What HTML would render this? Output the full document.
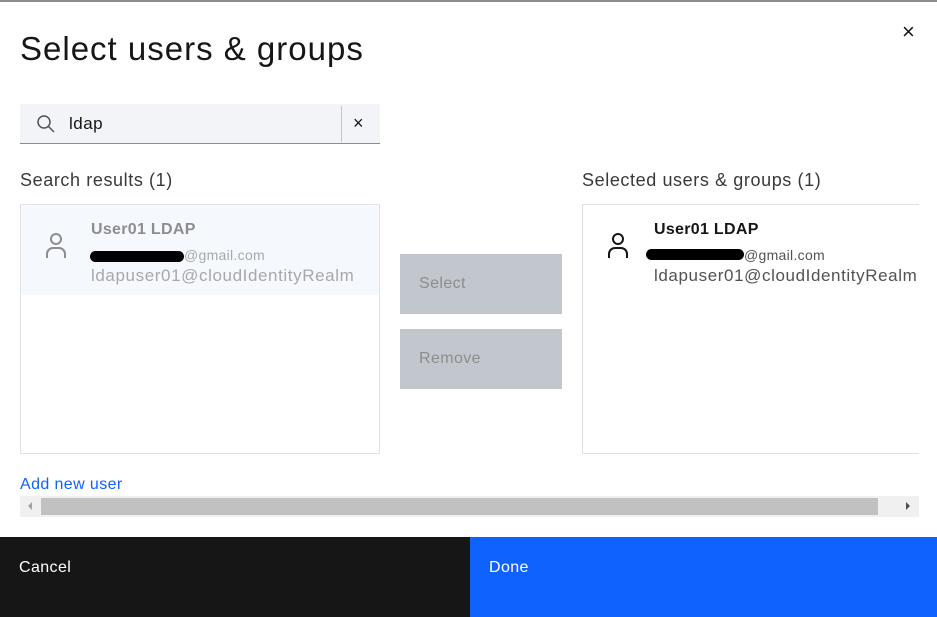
<!DOCTYPE html>
<html><head><style>
*{box-sizing:border-box;margin:0;padding:0}
body{width:937px;height:617px;overflow:hidden;background:#fff;font-family:"Liberation Sans",sans-serif;position:relative;color:#161616}
.a{position:absolute;white-space:nowrap}
</style></head><body>
<div class="a" style="left:0;top:0;width:937px;height:2px;background:#8d8d8d"></div>
<div class="a" style="left:20px;top:30px;font-size:33px;letter-spacing:1px;color:#161616">Select users &amp; groups</div>
<div class="a" style="left:902px;top:19px;font-size:22px">×</div>
<div class="a" style="left:20px;top:104px;width:360px;height:40px;background:#f2f4f8;border-bottom:1px solid #8d8d8d"></div>
<svg class="a" style="left:36px;top:114px" width="20" height="20" viewBox="0 0 20 20"><circle cx="8" cy="8" r="6" fill="none" stroke="#525252" stroke-width="1.5"/><line x1="12.5" y1="12.5" x2="18" y2="18" stroke="#525252" stroke-width="1.5"/></svg>
<div class="a" style="left:69px;top:114px;font-size:17px;letter-spacing:0.5px">ldap</div>
<div class="a" style="left:341px;top:106px;width:1px;height:36px;background:#c6c6c6"></div>
<div class="a" style="left:353px;top:113px;font-size:18px">×</div>
<div class="a" style="left:20px;top:170px;font-size:18px;letter-spacing:0.6px;color:#393939">Search results (1)</div>
<div class="a" style="left:582px;top:170px;font-size:18px;letter-spacing:0.6px;color:#393939">Selected users &amp; groups (1)</div>
<div class="a" style="left:20px;top:204px;width:360px;height:250px;border:1px solid #dde1e6"></div>
<div class="a" style="left:21px;top:205px;width:358px;height:90px;background:#f5f8fd"></div>
<svg class="a" style="left:44px;top:231px" width="24" height="28" viewBox="0 0 24 28"><circle cx="12" cy="8" r="5" fill="none" stroke="#8d8d8d" stroke-width="2"/><path d="M3 27v-4a6 6 0 0 1 6-6h6a6 6 0 0 1 6 6v4" fill="none" stroke="#8d8d8d" stroke-width="2"/></svg>
<div class="a" style="left:91px;top:221px;font-size:16px;font-weight:bold;letter-spacing:0.3px;color:#8d8d8d">User01 LDAP</div>
<div class="a" style="left:90px;top:251px;width:94px;height:11px;background:#000;border-radius:6px"></div>
<div class="a" style="left:184px;top:247px;font-size:14px;letter-spacing:0.3px;color:#a8a8a8">@gmail.com</div>
<div class="a" style="left:91px;top:266px;font-size:17px;letter-spacing:0.6px;color:#a8a8a8">ldapuser01@cloudIdentityRealm</div>
<div class="a" style="left:400px;top:254px;width:162px;height:60px;background:#c1c7cd;color:#8d8d8d;font-size:16px;letter-spacing:0.4px;padding:21px 19px">Select</div>
<div class="a" style="left:400px;top:329px;width:162px;height:60px;background:#c1c7cd;color:#8d8d8d;font-size:16px;letter-spacing:0.4px;padding:21px 19px">Remove</div>
<div class="a" style="left:582px;top:204px;width:337px;height:250px;border:1px solid #dde1e6;border-right:none"></div>
<svg class="a" style="left:606px;top:231px" width="24" height="28" viewBox="0 0 24 28"><circle cx="12" cy="8" r="5" fill="none" stroke="#161616" stroke-width="2"/><path d="M3 27v-4a6 6 0 0 1 6-6h6a6 6 0 0 1 6 6v4" fill="none" stroke="#161616" stroke-width="2"/></svg>
<div class="a" style="left:654px;top:221px;font-size:16px;font-weight:bold;letter-spacing:0.3px">User01 LDAP</div>
<div class="a" style="left:646px;top:249px;width:98px;height:11px;background:#000;border-radius:6px"></div>
<div class="a" style="left:744px;top:247px;font-size:14px;letter-spacing:0.3px;color:#525252">@gmail.com</div>
<div class="a" style="left:654px;top:266px;font-size:17px;letter-spacing:0.6px;color:#525252;width:265px;overflow:hidden">ldapuser01@cloudIdentityRealm</div>
<div class="a" style="left:20px;top:476px;font-size:16px;letter-spacing:0.4px;color:#0f62fe">Add new user</div>
<div class="a" style="left:20px;top:496px;width:899px;height:21px;background:#f0f0f0"></div>
<div class="a" style="left:41px;top:498px;width:837px;height:17px;background:#c1c1c1"></div>
<div class="a" style="left:28px;top:502px;width:0;height:0;border-top:4px solid transparent;border-bottom:4px solid transparent;border-right:4px solid #a3a3a3"></div>
<div class="a" style="left:906px;top:502px;width:0;height:0;border-top:4px solid transparent;border-bottom:4px solid transparent;border-left:4px solid #505050"></div>
<div class="a" style="left:0;top:537px;width:470px;height:80px;background:#161616;color:#fff;font-size:16px;letter-spacing:0.4px;padding:22px 19px">Cancel</div>
<div class="a" style="left:470px;top:537px;width:467px;height:80px;background:#0f62fe;color:#fff;font-size:16px;letter-spacing:0.4px;padding:22px 19px">Done</div>
</body></html>
